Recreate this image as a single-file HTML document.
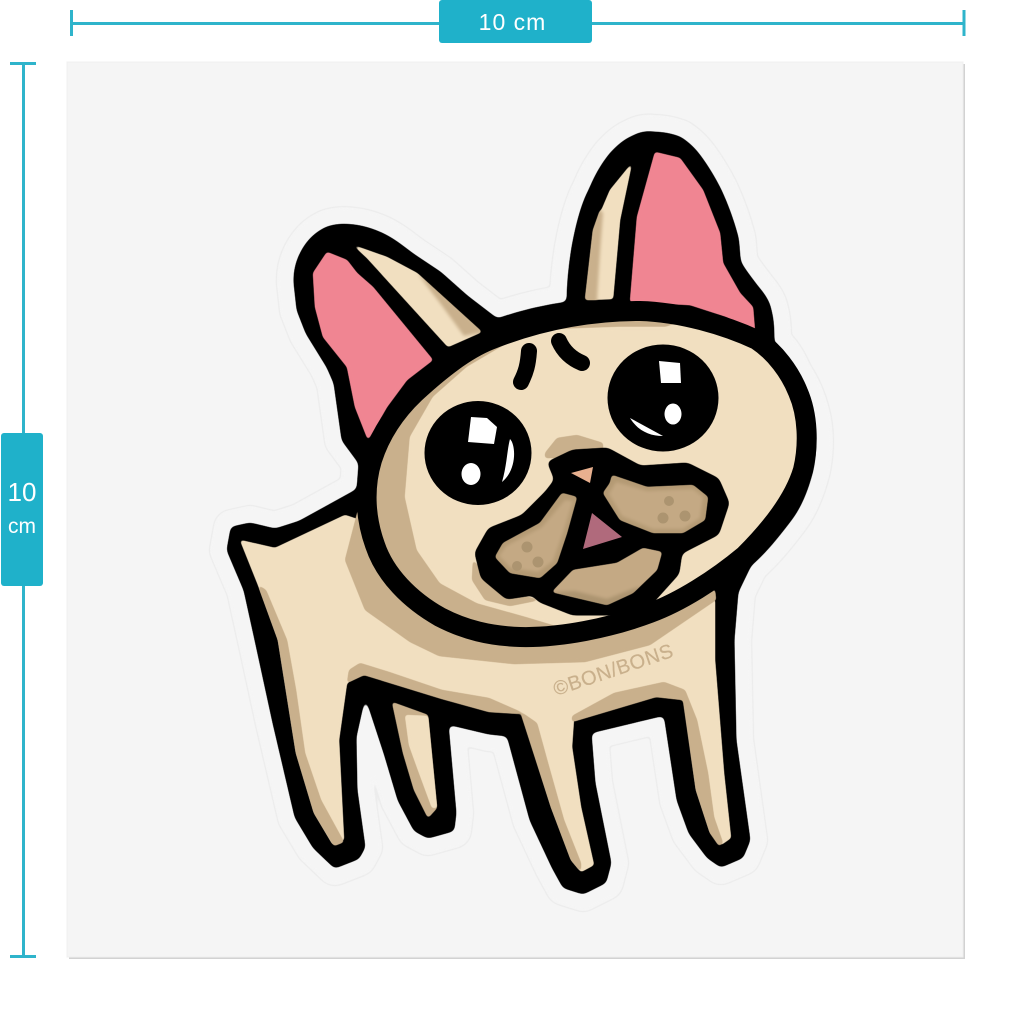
<!DOCTYPE html>
<html><head><meta charset="utf-8"><style>
html,body{margin:0;padding:0;background:#fff;width:1024px;height:1024px;overflow:hidden}
svg{display:block}
text{font-family:"Liberation Sans",sans-serif}
</style></head><body>
<svg width="1024" height="1024" viewBox="0 0 1024 1024" xmlns="http://www.w3.org/2000/svg">
<defs>
<filter id="s" filterUnits="userSpaceOnUse" x="0" y="0" width="1024" height="1024" color-interpolation-filters="sRGB">
<feGaussianBlur stdDeviation="3"/>
<feComponentTransfer><feFuncA type="linear" slope="9" intercept="-4"/></feComponentTransfer>
</filter>
<filter id="t" filterUnits="userSpaceOnUse" x="0" y="0" width="1024" height="1024" color-interpolation-filters="sRGB">
<feGaussianBlur stdDeviation="1.500"/>
<feComponentTransfer><feFuncA type="linear" slope="5" intercept="-1.700"/></feComponentTransfer>
</filter>
<path id="sil" d="M295 283C294 262 305 238 327 228C340 223 360 225 377 232C392 238 402 247 413 255L440 273L467 297L497 320C520 312 545 306 568 303C568 285 570 265 573 247C577 225 582 205 590 190C596 175 602 165 610 155C618 146 625 140 633 137C640 133 648 132 653 133C663 133 672 135 680 138C688 143 695 150 700 157C708 168 714 178 720 190C727 205 733 222 737 237C739 248 738 256 740 263C745 272 752 280 757 287C765 296 769 303 770 310C773 320 773 333 773 343C785 352 790 365 795 375C805 390 810 405 813 420C816 437 815 455 812 470C807 490 800 507 790 520C777 537 765 552 750 565L737 592L733 640L735 740L749 840L742 857L721 866L708 857L690 833L678 800L665 714L590 732L594 783L610 863L605 882L583 893L564 887L553 867L531 820L508 735L489 733L447 723L455 813L453 830L428 837L415 830L399 800L385 753L365 692L355 737L356 790L364 847L358 858L335 867L314 847L296 817L274 723L256 640L245 590L228 550L232 528L250 524L275 530L300 522L358 490L360 463L343 440L335 383L328 367L307 333L298 310Z"/>
</defs>
<!-- panel -->
<rect x="69" y="64" width="896" height="895" fill="#d2d2d2"/>
<rect x="67" y="62" width="896" height="895" fill="#f5f5f5" stroke="#f0f0f0" stroke-width="1"/>
<!-- rulers -->
<g fill="#2fb4cb">
<rect x="70" y="22" width="894" height="3"/><rect x="70" y="10" width="3" height="26"/><rect x="962.500" y="10" width="3" height="26"/>
<rect x="22" y="63" width="3" height="894"/><rect x="10" y="62" width="26" height="3"/><rect x="10" y="955" width="26" height="3"/>
</g>
<rect x="439" y="0" width="153" height="43" rx="3" fill="#1fb1ca"/>
<rect x="1" y="433" width="42" height="153" rx="3" fill="#1fb1ca"/>
<text x="512.500" y="30" text-anchor="middle" font-size="23" fill="#fff" letter-spacing="1">10 cm</text>
<text x="22" y="501" text-anchor="middle" font-size="26" fill="#fff">10</text>
<text x="22" y="533" text-anchor="middle" font-size="21" fill="#fff">cm</text>
<!-- sticker contour -->
<g filter="url(#t)"><use href="#sil" fill="#ececec" stroke="#ececec" stroke-width="38" stroke-linejoin="round"/></g>
<g filter="url(#t)"><use href="#sil" fill="#f5f5f5" stroke="#f5f5f5" stroke-width="35.500" stroke-linejoin="round"/></g>
<g filter="url(#s)"><use href="#sil" fill="#000" stroke="#000" stroke-width="3" stroke-linejoin="round"/></g>
<!-- back leg -->
<path d="M392 702L428 715L437 808L428 818L414 790L403 753Z" fill="#c9b08c" filter="url(#t)"/>
<path d="M405 715L428 716L437 808L432 808L418 770L409 745Z" fill="#f1dfc0" filter="url(#t)"/>
<!-- body -->
<g filter="url(#t)">
<path d="M240 540L275 548L345 515L360 520L700 590L715 600L715 660L724 773L731 838L721 845L710 833L696 790L683 697L656 695L574 718L572 747L581 807L594 865L581 872L571 860L551 807L521 712L489 710L442 697L364 673L347 683L339 740L344 840L333 845L314 813L296 753L278 640L258 585Z" fill="#f1dfc0"/>
</g>
<g fill="#c9b08c" filter="url(#t)">
<path d="M358 510L345 560L365 610L410 642L439 656L514 664L585 662L650 645L716 600L715 590L500 590Z"/>
<path d="M347 683L349 670L360 663L389 672L442 690L489 698L521 712L537 723L548 763L564 820L581 863L581 872L571 860L551 807L521 714L489 712L442 699L364 675Z"/>
<path d="M572 722L572 716L614 693L664 682L685 690L697 720L708 773L714 817L723 843L719 846L710 833L696 790L683 700L656 697Z"/>
<path d="M258 585L266 590L287 640L296 690L305 753L321 800L344 842L334 846L314 813L296 753L278 640Z"/>
</g>
<text transform="translate(556 696) rotate(-18.500)" font-size="20" fill="#c9b08c" letter-spacing="1.200" textLength="126" stroke="#c9b08c" stroke-width=".2">©BON/BONS</text>
<!-- ears -->
<g filter="url(#t)">
<path d="M327 252L313 273L315 307L323 337L347 367L355 407L368 440L387 407L407 380L433 360L373 287L357 273L347 260Z" fill="#f08592"/>
<path d="M353 245L387 257L417 273L482 332L448 347L367 258Z" fill="#f1dfc0"/>
<path d="M417 273L482 332L464 336L440 303Z" fill="#c9b08c"/>
<path d="M655 152L680 158L703 190L720 233L723 263L740 293L753 307L755 332L727 317L690 305L630 302L637 217Z" fill="#f08592"/>
<path d="M632 163L610 190L593 230L585 300L613 299L620 220Z" fill="#f1dfc0"/>
<path d="M600 210L593 230L585 300L597 300L600 253L603 213Z" fill="#c9b08c"/>
</g>
<!-- head -->
<path id="hd" d="M640 311C680 312 725 325 757 340C775 352 790 372 798 392C808 415 809 445 803 470C795 497 775 525 745 555C715 580 680 602 650 613C610 628 560 638 520 637C490 636 465 630 440 617C410 600 385 575 375 545C366 520 363 490 372 460C380 435 395 412 415 393C440 370 465 350 490 340C540 320 590 311 640 311Z" fill="#c9b08c"/>
<path d="M666 327L700 315L760 335L800 385L815 435L808 480L780 530L735 570L650 613L590 636L527 617L477 603L440 583L417 550L405 497L410 437L433 397L467 367L513 340L533 330L620 327Z" fill="#f1dfc0" filter="url(#t)"/>
<path d="M473 560L472 580L485 600L510 606L540 600L500 590Z" fill="#c9b08c" filter="url(#t)"/>
<path d="M545 453L557 438L577 435L603 443L603 458L545 458Z" fill="#c9b08c" filter="url(#t)"/>
<path d="M640 311C680 312 725 325 757 340C775 352 790 372 798 392C808 415 809 445 803 470C795 497 775 525 745 555C715 580 680 602 650 613C610 628 560 638 520 637C490 636 465 630 440 617C410 600 385 575 375 545C366 520 363 490 372 460C380 435 395 412 415 393C440 370 465 350 490 340C540 320 590 311 640 311Z" fill="none" stroke="#000" stroke-width="20" stroke-linejoin="round"/>
<!-- brows -->
<path d="M529 351C528 365 526 372 521 382" fill="none" stroke="#000" stroke-width="16" stroke-linecap="round"/>
<path d="M559 341C563 350 570 358 582 363" fill="none" stroke="#000" stroke-width="16" stroke-linecap="round"/>
<!-- eyes -->
<ellipse cx="663" cy="398" rx="55.500" ry="53.500" fill="#000"/>
<ellipse cx="478" cy="453" rx="53.500" ry="52" fill="#000"/>
<g fill="#fff">
<path d="M659 361L680 363L681 383L661 383Z"/>
<ellipse cx="673" cy="414" rx="8.500" ry="10.500"/>
<path d="M630 418L663 436C650 436 638 431 630 418Z"/>
<path d="M471 417L487 418L497 427L494 444L468 442Z"/>
<ellipse cx="471" cy="474" rx="9.500" ry="11"/>
<path d="M510 439C516 445 517 470 502 482C507 465 507 450 510 439Z"/>
</g>
<!-- muzzle -->
<path d="M550 463L573 452L607 450L640 468L687 465L717 480L727 503L717 533L680 552L677 573L650 603L613 613L573 613L540 600L533 593L507 597L483 577L477 553L490 530L523 517L547 493L557 480Z" fill="#000" stroke="#000" stroke-width="5" stroke-linejoin="round" filter="url(#s)"/>
<g filter="url(#t)">
<path d="M612 475L647 487L693 485L708 497L705 520L683 533L653 533L620 520L603 493L610 483Z" fill="#b49a74"/>
<path d="M616 482L647 491L693 489L703 497L700 518L683 529L653 529L622 516L609 494Z" fill="#c4a984"/>
<path d="M562 493L577 497L567 533L557 563L540 578L510 573L495 557L503 543L540 523Z" fill="#b49a74"/>
<path d="M565 500L573 501L563 533L553 561L538 572L511 568L499 556L506 546L542 527Z" fill="#c4a984"/>
<path d="M662 552L657 570L633 593L607 605L573 597L552 592L573 570L617 563L643 548Z" fill="#c4a984"/>
<path d="M552 592L573 597L607 605L633 593L640 586L607 599L575 591Z" fill="#ac9470"/>
</g>
<g fill="#ac9470"><circle cx="669" cy="501" r="5"/><circle cx="663" cy="518" r="5.500"/><circle cx="685" cy="516" r="5.500"/><circle cx="527" cy="547" r="5.500"/><circle cx="538" cy="562" r="5.500"/><circle cx="517" cy="566" r="5"/></g>
<path d="M592 513L622 537L583 549Z" fill="#b06a7c"/>
<path d="M571 473L593 467L590 483Z" fill="#e8b08f"/>
</svg>
</body></html>
